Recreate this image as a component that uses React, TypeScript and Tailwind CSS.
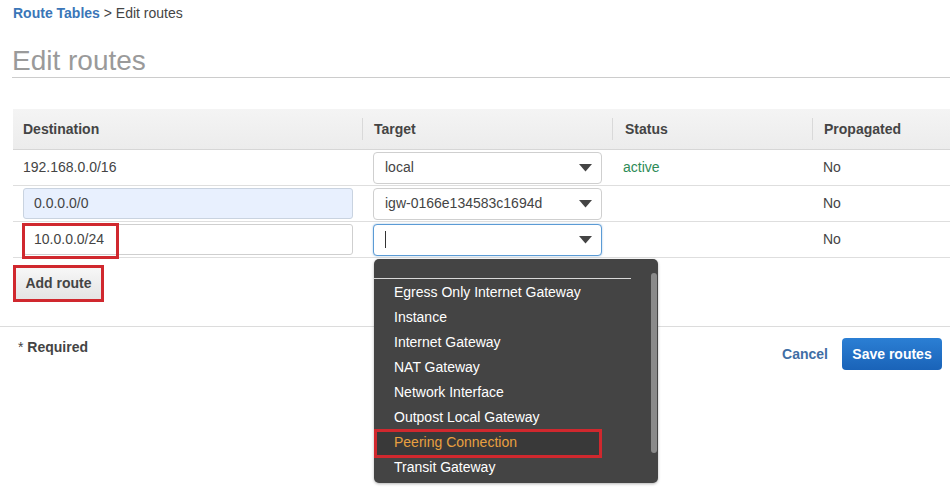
const targets = [
  'Egress Only Internet Gateway',
  'Instance',
  'Internet Gateway',
  'NAT Gateway',
  'Network Interface',
  'Outpost Local Gateway',
  'Peering Connection',
  'Transit Gateway',
]

/** Fake select box with the solid down-caret. */
function SelectBox({ value, focused }: { value?: string; focused?: boolean }) {
  return (
    <div
      className={`flex h-[32px] w-[229px] items-center justify-between rounded-[4px] border bg-white pl-[11px] pr-[9px] text-[14px] text-[#444] ${
        focused ? 'border-[#5b9bd5] shadow-[0_0_2px_rgba(60,130,200,0.5)]' : 'border-[#cfcfcf]'
      }`}
    >
      {value ? <span>{value}</span> : <span className="h-[17px] w-px bg-[#333]" />}
      <svg width="13" height="8" viewBox="0 0 13 8" aria-hidden>
        <path d="M0 0h13L6.5 7.5z" fill="#444" />
      </svg>
    </div>
  )
}

function Row({
  dest,
  target,
  status,
}: {
  dest: React.ReactNode
  target: React.ReactNode
  status?: string
}) {
  return (
    <div className="grid h-[36px] grid-cols-[349px_250px_200px_138px] items-center border-b border-[#dedede] text-[14px] text-[#444]">
      <div className="pl-[10px]">{dest}</div>
      <div className="pl-[11px]">{target}</div>
      <div className="pl-[11px] text-[#2e8b57]">{status}</div>
      <div className="pl-[11px]">No</div>
    </div>
  )
}

export default function App() {
  return (
    <div
      className="relative h-[488px] w-[950px] overflow-hidden bg-white"
      style={{ fontFamily: '"Liberation Sans", Arial, sans-serif' }}
    >
      {/* Breadcrumb */}
      <div className="pl-[13px] pt-[5px] text-[14px] leading-[16px] text-[#444]">
        <span className="font-bold text-[#3a76b8]">Route Tables</span>
        <span> &gt; Edit routes</span>
      </div>

      <h1 className="ml-[12px] mt-[24px] border-b border-[#cccccc] text-[28px] leading-[32px] text-[#9a9a9a]">
        Edit routes
      </h1>

      {/* Routes table */}
      <div className="ml-[13px] mt-[31px]">
        <div className="grid h-[41px] grid-cols-[349px_250px_200px_138px] items-center border-b border-[#d6d6d6] bg-gradient-to-b from-[#f4f4f4] to-[#ececec] text-[14px] font-bold text-[#444]">
          <div className="pl-[10px]">Destination</div>
          <div className="flex h-[22px] items-center border-l border-[#d9d9d9] pl-[11px]">Target</div>
          <div className="flex h-[22px] items-center border-l border-[#d9d9d9] pl-[12px]">Status</div>
          <div className="flex h-[22px] items-center border-l border-[#d9d9d9] pl-[11px]">Propagated</div>
        </div>

        <Row dest="192.168.0.0/16" target={<SelectBox value="local" />} status="active" />
        <Row
          dest={
            <div className="flex h-[31px] w-[330px] items-center rounded-[3px] border border-[#c9d3e0] bg-[#e8f0fe] pl-[10px]">
              0.0.0.0/0
            </div>
          }
          target={<SelectBox value="igw-0166e134583c1694d" />}
        />
        <Row
          dest={
            <div className="relative flex h-[31px] w-[330px] items-center rounded-[3px] border border-[#cfcfcf] bg-white pl-[10px]">
              10.0.0.0/24
              <span className="pointer-events-none absolute left-[-2px] top-[-2px] h-[36px] w-[97px] border-[3px] border-[#d0282e]" />
            </div>
          }
          target={<SelectBox focused />}
        />

        <div className="mt-[7px] flex h-[37px] w-[91px] items-center justify-center border-[3px] border-[#d0282e] bg-gradient-to-b from-[#f7f7f7] to-[#e4e4e4] text-[14px] font-bold text-[#444]">
          Add route
        </div>
      </div>

      <div className="mt-[24px] border-t border-[#dcdcdc]" />

      {/* Footer */}
      <div className="flex items-start justify-between pl-[18px] pr-[8px] pt-[11px] text-[14px] text-[#444]">
        <div className="leading-[18px]">
          * <span className="font-bold">Required</span>
        </div>
        <div className="flex items-center gap-[14px]">
          <span className="font-bold text-[#3f6ea5]">Cancel</span>
          <span className="flex h-[32px] w-[100px] items-center justify-center rounded-[4px] bg-gradient-to-b from-[#2b7fd4] to-[#1a63b8] font-bold text-white">
            Save routes
          </span>
        </div>
      </div>

      {/* Target dropdown menu */}
      <div className="absolute left-[374px] top-[259px] h-[224px] w-[284px] rounded-[5px] bg-[#444444] shadow-[0_1px_3px_rgba(0,0,0,0.3)]">
        <div className="h-[20px] w-[257px] border-b border-[#d8d8d8]" />
        <div className="pt-[1px]">
          {targets.map((t) => (
            <div
              key={t}
              className={`relative flex h-[25px] items-center pl-[20px] text-[14px] ${
                t === 'Peering Connection' ? 'text-[#e8a040]' : 'text-white'
              }`}
            >
              {t === 'Peering Connection' && (
                <span className="pointer-events-none absolute left-0 top-[-1px] h-[29px] w-[228px] border-[3px] border-[#d0282e] bg-[#393939]" />
              )}
              <span className="relative">{t}</span>
            </div>
          ))}
        </div>
        <div className="absolute right-[1px] top-[14px] h-[180px] w-[6px] rounded-[3px] bg-[#8a8a8a]" />
      </div>
    </div>
  )
}
